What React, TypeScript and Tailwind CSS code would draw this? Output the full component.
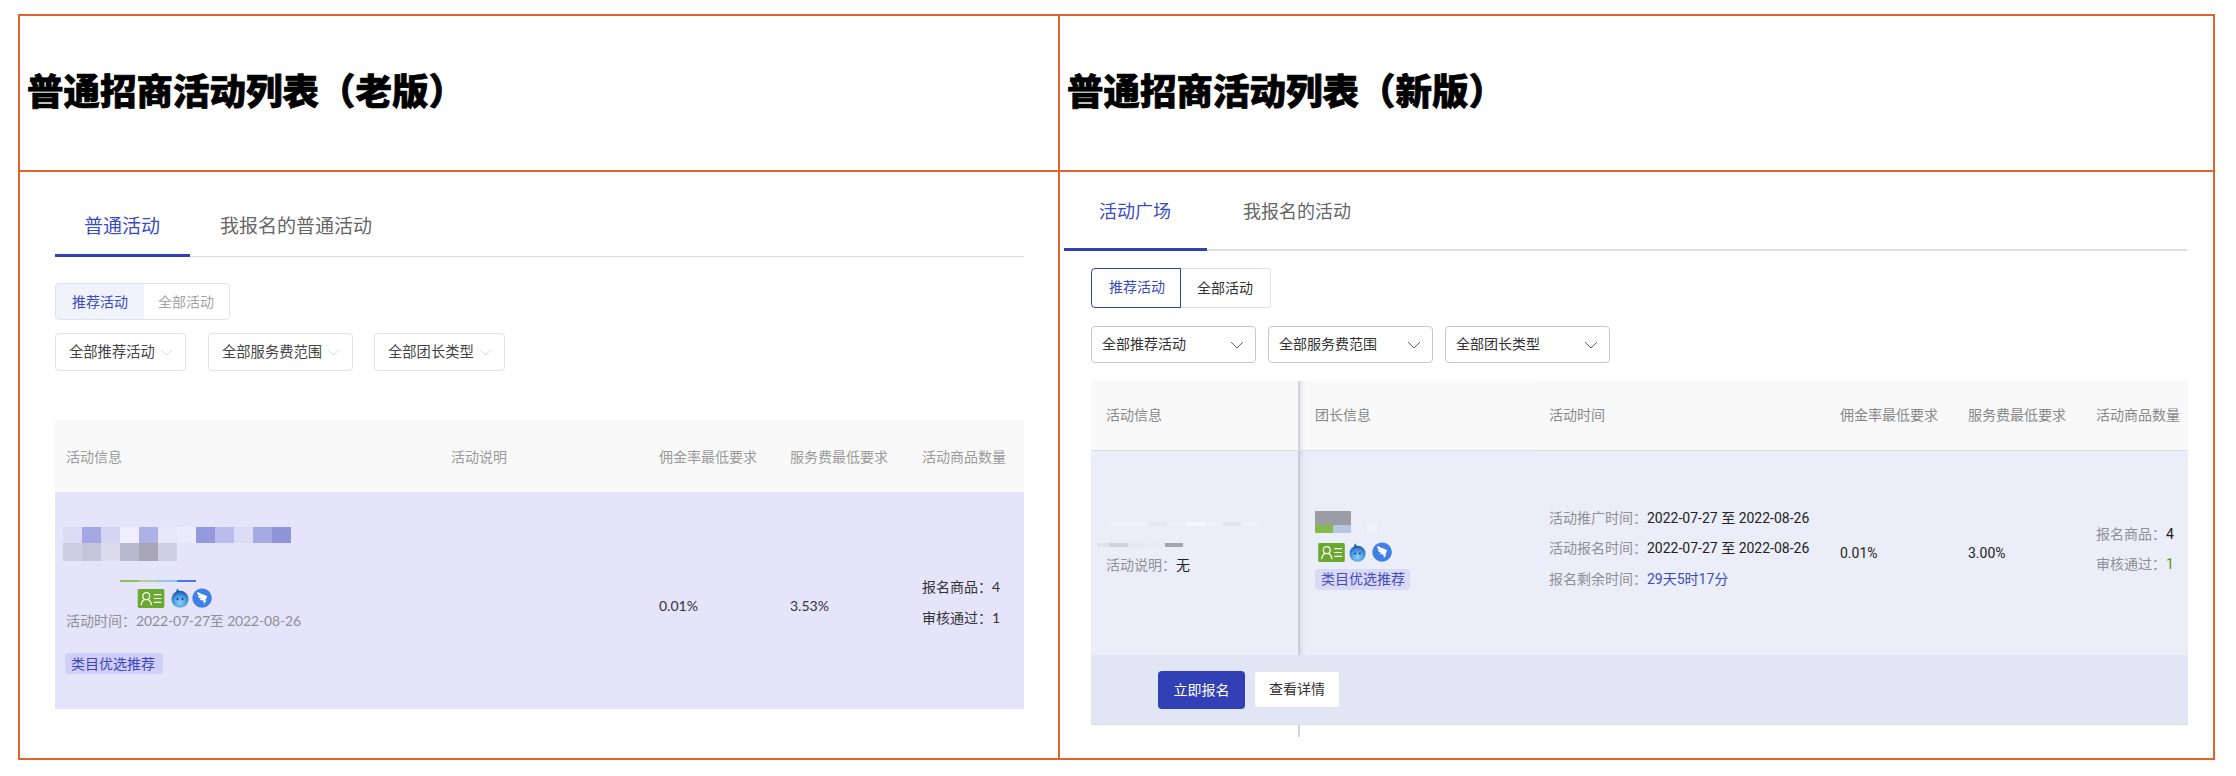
import React from 'react';
import { AiFillDingtalkCircle } from 'react-icons/ai';

const Chevron = ({ className }: { className: string }) => (
  <svg viewBox="0 0 14 8" className={className} fill="none" stroke="currentColor" strokeWidth="1">
    <path d="M1 1l6 6 6-6" />
  </svg>
);

const CardIcon = ({ className }: { className: string }) => (
  <svg viewBox="0 0 28 20" className={className}>
    <rect width="28" height="20" rx="1.5" fill="#6aa92f" />
    <circle cx="9" cy="7.5" r="3.6" fill="none" stroke="#fff" strokeWidth="1.3" />
    <path d="M3.5 17c.5-3.6 2.6-6 5.5-6s5 2.4 5.5 6" fill="none" stroke="#fff" strokeWidth="1.3" />
    <path d="M17 6h8M17 10h8M17 14h8" stroke="#fff" strokeWidth="1.3" />
  </svg>
);

const BallIcon = ({ className }: { className: string }) => (
  <svg viewBox="0 0 18 20" className={className}>
    <defs>
      <radialGradient id="ball" cx="50%" cy="70%" r="65%">
        <stop offset="0%" stopColor="#8fd0f8" />
        <stop offset="70%" stopColor="#3f8fdc" />
        <stop offset="100%" stopColor="#1f5da8" />
      </radialGradient>
    </defs>
    <path d="M5 5C5 3 5.5 1.5 7 .5 7 2 8 3 10 3.5Z" fill="#2a6cb5" />
    <circle cx="9" cy="11.3" r="8.5" fill="url(#ball)" />
    <circle cx="6.5" cy="11" r="1" fill="#123c70" />
    <circle cx="11.5" cy="11" r="1" fill="#123c70" />
  </svg>
);

const WingIcon = ({ className }: { className: string }) => (
  <span className={className + ' inline-flex items-center justify-center rounded-full bg-white'}>
    <AiFillDingtalkCircle className="w-[117%] h-[117%] shrink-0 text-[#3f7fe8]" />
  </span>
);

const Tab = ({ text, active, className }: { text: string; active?: boolean; className: string }) => (
  <div className={className + (active ? ' text-[#3a4bc4] border-b-[3px] border-[#2f40b8]' : ' text-[#666]')}>{text}</div>
);

const OldSelect = ({ text, width }: { text: string; width: string }) => (
  <div className={width + ' h-[38px] flex items-center justify-between pl-[13px] pr-[12px] rounded-[4px] border border-[#e2e2e6] text-[14.3px] text-[#444]'}>
    <span>{text}</span>
    <Chevron className="w-[13px] h-[7px] text-[#cfcfd4]" />
  </div>
);

const NewSelect = ({ text }: { text: string }) => (
  <div className="w-[165px] h-[37px] flex items-center justify-between pl-[10px] pr-[11px] rounded-[4px] border-[1.5px] border-[#c5c7d6] text-[14px] text-[#333]">
    <span>{text}</span>
    <Chevron className="w-[14px] h-[8px] text-[#5f6270]" />
  </div>
);

const OldPanel = () => (
  <div className="h-full pl-[35px]">
    <div className="w-[969px] h-[85px] flex border-b border-[#dcdcdc] text-[19px]">
      <Tab text="普通活动" active className="w-[135px] h-[85px] pt-[40px] pl-[29px] leading-[28px]" />
      <Tab text="我报名的普通活动" className="ml-[30px] pt-[40px] leading-[28px]" />
    </div>

    <div className="mt-[26px] w-[175px] h-[37px] flex rounded-[4px] border border-[#e2e2e6] text-[14px] overflow-hidden">
      <div className="w-[88px] bg-[#f0f3fc] text-[#3a4bc4] pl-[16px] leading-[35px]">推荐活动</div>
      <div className="text-[#a3a3a3] pl-[14px] leading-[35px]">全部活动</div>
    </div>

    <div className="mt-[13px] flex">
      <OldSelect text="全部推荐活动" width="w-[131px]" />
      <div className="ml-[22px]"><OldSelect text="全部服务费范围" width="w-[145px]" /></div>
      <div className="ml-[21px]"><OldSelect text="全部团长类型" width="w-[131px]" /></div>
    </div>

    <div className="mt-[49px] w-[969px]">
      <div className="h-[72px] grid grid-cols-[385px_208px_131px_132px_113px] items-center bg-[#f9f9f9] text-[14px] text-[#9a9a9a]">
        <div className="pl-[11px]">活动信息</div>
        <div className="pl-[11px]">活动说明</div>
        <div className="pl-[11px]">佣金率最低要求</div>
        <div className="pl-[11px]">服务费最低要求</div>
        <div className="pl-[11px]">活动商品数量</div>
      </div>
      <div className="h-[217px] grid grid-cols-[385px_208px_131px_132px_113px] items-center bg-[#e6e4fb] text-[14px] text-[#333]">
        <div className="h-full pt-[35px]">
          <div className="ml-[8px] flex h-[16px]">
            <div className="w-[19px] bg-[#dcdcf6]" />
            <div className="w-[19px] bg-[#a3a8e2]" />
            <div className="w-[19px] bg-[#d2d5f3]" />
            <div className="w-[19px] bg-[#eeeefc]" />
            <div className="w-[19px] bg-[#adb1e8]" />
            <div className="w-[19px] bg-[#e8e8fb]" />
            <div className="w-[19px] bg-[#ebebfc]" />
            <div className="w-[19px] bg-[#9399dc]" />
            <div className="w-[19px] bg-[#babdec]" />
            <div className="w-[19px] bg-[#dcdcf6]" />
            <div className="w-[19px] bg-[#a6a9e2]" />
            <div className="w-[19px] bg-[#8e94d8]" />
          </div>
          <div className="ml-[8px] flex h-[18px]">
            <div className="w-[19px] bg-[#cfcde3]" />
            <div className="w-[19px] bg-[#c6c4da]" />
            <div className="w-[19px] bg-[#dddaee]" />
            <div className="w-[19px] bg-[#bab8cc]" />
            <div className="w-[19px] bg-[#a8a6b6]" />
            <div className="w-[19px] bg-[#cfcfe3]" />
          </div>
          <div className="ml-[65px] mt-[19px] flex h-[2px]">
            <div className="w-[19px] bg-[#8bc25e]" />
            <div className="w-[19px] bg-[#b0cf93]" />
            <div className="w-[19px] bg-[#8fc9f2]" />
            <div className="w-[19px] bg-[#3f7de6]" />
          </div>
          <div className="ml-[82px] mt-[6px] flex items-center">
            <CardIcon className="w-[28px] h-[19px]" />
            <BallIcon className="ml-[6px] w-[18px] h-[20px]" />
            <WingIcon className="ml-[4px] w-[19px] h-[19px]" />
          </div>
          <div className="ml-[11px] mt-[2px] leading-[22px] text-[#8f8f96]">活动时间：<span className="tracking-[-0.15px]">2022-07-27至 2022-08-26</span></div>
          <div className="ml-[10px] mt-[21px] w-[98px] h-[21px] rounded-[4px] bg-[#cfcffa] text-[#3d46b8] pl-[6px] leading-[21px]">类目优选推荐</div>
        </div>
        <div />
        <div className="pl-[11px] pt-[10px]">0.01%</div>
        <div className="pl-[11px] pt-[10px]">3.53%</div>
        <div className="pl-[11px] leading-[31px] pt-[3px]">
          <div>报名商品：4</div>
          <div>审核通过：1</div>
        </div>
      </div>
    </div>
  </div>
);

const NewPanel = () => (
  <div className={'h-full pl-[4px] font-["Roboto","Noto_Sans_CJK_SC",sans-serif]'}>
    <div className="w-[1123px] h-[79px] flex border-b-2 border-[#dcdde8] text-[18px]">
      <Tab text="活动广场" active className="w-[143px] h-[79px] pt-[27px] pl-[35px] leading-[26px]" />
      <Tab text="我报名的活动" className="ml-[36px] pt-[27px] leading-[26px]" />
    </div>

    <div className="ml-[27px] mt-[17px] w-[180px] h-[40px] flex text-[14px]">
      <div className="w-[90px] rounded-l-[4px] border-[1.5px] border-[#2f40b8] text-[#3a4bc4] pl-[17px] leading-[37px]">推荐活动</div>
      <div className="w-[90px] rounded-r-[4px] border border-l-0 border-[#dfdfe6] text-[#333] pl-[16px] leading-[38px]">全部活动</div>
    </div>

    <div className="ml-[27px] mt-[18px] flex gap-[12px]">
      <NewSelect text="全部推荐活动" />
      <NewSelect text="全部服务费范围" />
      <NewSelect text="全部团长类型" />
    </div>

    <div className="ml-[27px] mt-[18px] w-[1097px]">
      <div className="h-[70px] grid grid-cols-[209px_234px_292px_128px_128px_106px] items-center bg-[#f9f9f9] border-b border-[#dcdde8] text-[14px] text-[#888]">
        <div className="h-full pl-[15px] flex items-center border-r-2 border-[#d4d5dc]">活动信息</div>
        <div className="h-full pl-[15px] flex items-center shadow-[inset_5px_0_5px_-4px_rgba(0,0,0,0.12)]">团长信息</div>
        <div className="pl-[15px]">活动时间</div>
        <div className="pl-[14px]">佣金率最低要求</div>
        <div className="pl-[14px]">服务费最低要求</div>
        <div className="pl-[14px]">活动商品数量</div>
      </div>

      <div className="h-[204px] grid grid-cols-[209px_234px_292px_128px_128px_106px] items-center bg-[#ebeef8] text-[14px] text-[#222]">
        <div className="h-full pt-[71px] border-r-2 border-[#c9cbd6]">
          <div className="ml-[17px] flex h-[4px]">
            <div className="w-[40px] bg-[#eef0fa]" />
            <div className="w-[19px] bg-[#e6e8f4]" />
            <div className="w-[19px] bg-[#eceef9]" />
            <div className="w-[19px] bg-[#f4f6fd]" />
            <div className="w-[18px] bg-[#eef0fa]" />
            <div className="w-[18px] bg-[#e2e4ef]" />
            <div className="w-[18px] bg-[#f0f2fb]" />
          </div>
          <div className="ml-[7px] mt-[17px] flex h-[4px]">
            <div className="w-[11px] bg-[#e0e2ec]" />
            <div className="w-[19px] bg-[#d0d2dc]" />
            <div className="w-[19px] bg-[#e6e8f2]" />
            <div className="w-[18px] bg-[#e9ebf6]" />
            <div className="w-[18px] bg-[#a3a4ae]" />
          </div>
          <div className="ml-[15px] mt-[7px] leading-[22px]">
            <span className="text-[#8f8f96]">活动说明：</span>无
          </div>
        </div>
        <div className="h-full pt-[60px] pl-[15px] shadow-[inset_5px_0_5px_-4px_rgba(0,0,0,0.12)]">
          <div className="flex h-[14px]">
            <div className="w-[36px] bg-[#9c9ca4]" />
          </div>
          <div className="flex h-[8px]">
            <div className="w-[18px] bg-[#85bb4a]" />
            <div className="w-[18px] bg-[#b5c5e3]" />
            <div className="ml-[16px] w-[10px] bg-[#f0f2fb]" />
          </div>
          <div className="mt-[10px] ml-[3px] flex items-center">
            <CardIcon className="w-[27px] h-[19px]" />
            <BallIcon className="ml-[4px] w-[17px] h-[19px]" />
            <WingIcon className="ml-[7px] w-[19px] h-[19px]" />
          </div>
          <div className="mt-[7px] w-[95px] h-[21px] rounded-[4px] bg-[#d9d9f8] text-[#444cb8] pl-[6px] leading-[21px]">类目优选推荐</div>
        </div>
        <div className="pl-[15px] pb-[9px] leading-[30.5px]">
          <div className="flex"><span className="w-[98px] shrink-0 text-[#8f8f96]">活动推广时间：</span>2022-07-27 至 2022-08-26</div>
          <div className="flex"><span className="w-[98px] shrink-0 text-[#8f8f96]">活动报名时间：</span>2022-07-27 至 2022-08-26</div>
          <div className="flex"><span className="w-[98px] shrink-0 text-[#8f8f96]">报名剩余时间：</span><span className="text-[#3a4bc4]">29天5时17分</span></div>
        </div>
        <div className="pl-[14px]">0.01%</div>
        <div className="pl-[14px]">3.00%</div>
        <div className="pl-[14px] pb-[8px] leading-[30px] text-[#8f8f96]">
          <div>报名商品：<span className="text-[#222]">4</span></div>
          <div>审核通过：<span className="text-[#4d9a1e]">1</span></div>
        </div>
      </div>

      <div className="h-[70px] flex items-center bg-[#e2e5f4] border-b border-[#dcdde8] text-[14px]">
        <div className="ml-[67px] w-[87px] h-[38px] rounded-[4px] bg-[#3240b5] text-white text-center leading-[38px]">立即报名</div>
        <div className="ml-[10px] w-[84px] h-[35px] rounded-[3px] bg-white text-[#333] text-center leading-[35px]">查看详情</div>
      </div>

      <div className="w-[209px] h-[12px] border-r-2 border-[#d4d5dc]" />
    </div>
  </div>
);

export default function App() {
  return (
    <div className={'font-["Lato","Noto_Sans_CJK_SC",sans-serif] w-[2236px] h-[776px] bg-white pt-[14px] pl-[18px]'}>
      <div className="w-[2197px] h-[746px] border-2 border-[#e0652c] grid grid-cols-[1040px_1fr] grid-rows-[156px_1fr]">
        <div className="border-r-2 border-b-2 border-[#e0652c] pl-[7px] pb-[3px] flex items-center">
          <h1 className="text-[36.5px] font-black text-black leading-none [-webkit-text-stroke:0.7px_#000]">普通招商活动列表（老版）</h1>
        </div>
        <div className="border-b-2 border-[#e0652c] pl-[7px] pb-[3px] flex items-center">
          <h1 className="text-[36.5px] font-black text-black leading-none [-webkit-text-stroke:0.7px_#000]">普通招商活动列表（新版）</h1>
        </div>
        <div className="border-r-2 border-[#e0652c]"><OldPanel /></div>
        <div><NewPanel /></div>
      </div>
    </div>
  );
}
